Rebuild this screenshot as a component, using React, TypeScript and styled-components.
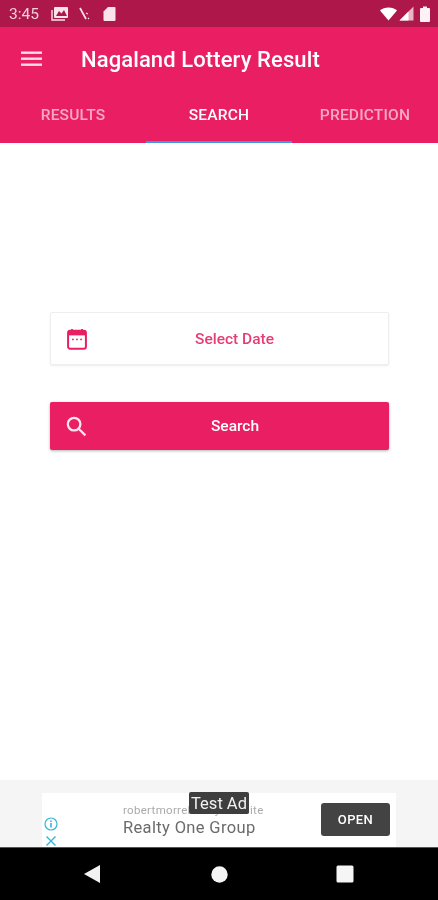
import React from "react";
import styled, { createGlobalStyle } from "styled-components";

const GlobalStyle = createGlobalStyle`
  html, body {
    margin: 0;
    padding: 0;
    background: #fff;
  }
  * {
    box-sizing: border-box;
  }
`;

const Screen = styled.div`
  width: 438px;
  height: 900px;
  display: flex;
  flex-direction: column;
  overflow: hidden;
  font-family: Roboto, "Liberation Sans", sans-serif;
  filter: blur(0.35px);
`;

const StatusBar = styled.div`
  height: 27px;
  flex: none;
  background: #ad1749;
  color: #fbe3ea;
  display: flex;
  align-items: center;
  padding: 0 8px 0 9px;
`;

const Clock = styled.span`
  font-size: 15.5px;
  font-weight: 400;
  width: 42px;
  opacity: 0.9;
`;

const StatusIcons = styled.div<{ $gap: number }>`
  display: flex;
  align-items: center;
  gap: ${(p) => p.$gap}px;
`;

const Spacer = styled.div`
  flex: 1;
`;

const AppBar = styled.header`
  flex: none;
  height: 116px;
  background: #e91e63;
  display: flex;
  flex-direction: column;
`;

const TitleRow = styled.div`
  height: 64px;
  display: flex;
  align-items: center;
  padding: 0 0 0 21px;
`;

const MenuButton = styled.div`
  width: 60px;
  display: flex;
  align-items: center;
`;

const Title = styled.h1`
  margin: 0;
  color: #fff;
  font-size: 22px;
  font-weight: 500;
  letter-spacing: 0.1px;
`;

const Tabs = styled.nav`
  flex: 1;
  display: grid;
  grid-template-columns: 146px 146px 146px;
`;

const Tab = styled.div<{ $active?: boolean }>`
  display: flex;
  align-items: center;
  justify-content: center;
  padding-bottom: 3px;
  font-size: 15.5px;
  font-weight: 500;
  letter-spacing: 0.2px;
  color: ${(p) => (p.$active ? "#fff" : "rgba(255, 255, 255, 0.62)")};
  border-bottom: 2px solid ${(p) => (p.$active ? "#3f97e8" : "transparent")};
`;

const Content = styled.main`
  flex: 1;
  background: #fff;
  padding: 169px 49px 0 50px;
  display: flex;
  flex-direction: column;
  gap: 37px;
`;

const DateCard = styled.div`
  height: 53px;
  background: #fff;
  border: 1px solid #eeeeee;
  border-radius: 2px;
  box-shadow: 0 1px 2px rgba(0, 0, 0, 0.08);
  display: flex;
  align-items: center;
  padding-left: 16px;
  color: #e63d74;
`;

const SearchButton = styled.div`
  height: 48px;
  background: #e91e63;
  border-radius: 2px;
  box-shadow: 0 1px 3px rgba(0, 0, 0, 0.3);
  display: flex;
  align-items: center;
  padding-left: 16px;
  color: #fff;
`;

const FieldLabel = styled.span`
  flex: 1;
  text-align: center;
  font-size: 15.5px;
  font-weight: 500;
  padding-right: 6px;
`;

const AdStrip = styled.div`
  flex: none;
  height: 67px;
  background: #f5f5f5;
  padding: 13px 42px 0 42px;
`;

const AdBanner = styled.div`
  height: 54px;
  background: #fff;
  position: relative;
  display: flex;
  align-items: center;
  padding: 0 6px 2px 81px;
`;

const AdChoices = styled.div`
  position: absolute;
  left: 2px;
  bottom: 1px;
  display: flex;
  flex-direction: column;
  align-items: center;
  gap: 5px;
`;

const AdText = styled.div`
  flex: 1;
  display: flex;
  flex-direction: column;
  gap: 1px;
  padding-top: 1px;
`;

const AdDomain = styled.span`
  font-size: 11.5px;
  color: #aaaaaa;
  letter-spacing: 0.3px;
`;

const AdTitle = styled.span`
  font-size: 16.5px;
  color: #6b6b6b;
  letter-spacing: 0.35px;
`;

const OpenButton = styled.div`
  width: 69px;
  height: 33px;
  background: #434343;
  border-radius: 3px;
  color: #fff;
  font-size: 13px;
  font-weight: 500;
  letter-spacing: 0.4px;
  display: flex;
  align-items: center;
  justify-content: center;
`;

const TestAdBadge = styled.div`
  position: absolute;
  top: -1px;
  left: 147px;
  width: 60px;
  height: 22px;
  background: #3e3e3e;
  border-radius: 2px;
  color: #f2f2f2;
  font-size: 16.5px;
  display: flex;
  align-items: center;
  justify-content: center;
`;

const NavBar = styled.div`
  flex: none;
  height: 53px;
  background: #000;
  border-top: 1px solid #555;
  display: grid;
  grid-template-columns: 128px 125px 1fr;
  align-items: center;
  padding-left: 83px;
`;

const MenuIcon = () => (
  <svg width="22" height="16" viewBox="0 0 22 16" fill="#fbdce7">
    <rect x="0" y="0.5" width="21" height="2.4" />
    <rect x="0" y="6.5" width="21" height="2.4" />
    <rect x="0" y="12.5" width="21" height="2.4" />
  </svg>
);

const CalendarIcon = () => (
  <svg width="20" height="22" viewBox="0 0 22 24" fill="none">
    <path d="M5.5 1v4M16.5 1v4" stroke="#e91e63" strokeWidth="2" />
    <rect x="1.2" y="3" width="19.6" height="19.6" rx="2.2" stroke="#e91e63" strokeWidth="2.2" />
    <rect x="1.2" y="3" width="19.6" height="5" fill="#e91e63" />
    <circle cx="6.5" cy="12.5" r="1" fill="#e91e63" />
    <circle cx="11" cy="12.5" r="1" fill="#e91e63" />
    <circle cx="15.5" cy="12.5" r="1" fill="#e91e63" />
  </svg>
);

const SearchIcon = () => (
  <svg width="21" height="21" viewBox="0 0 22 22" fill="none" stroke="#fde6ee" strokeWidth="2.4">
    <circle cx="8.5" cy="8.5" r="6.6" />
    <path d="M13.3 13.3 20.3 20.3" />
  </svg>
);

const App: React.FC = () => (
  <>
    <GlobalStyle />
    <Screen>
      <StatusBar>
        <Clock>3:45</Clock>
        <StatusIcons $gap={10}>
          <svg width="18" height="16" viewBox="0 0 18 16" fill="none">
            <rect x="3" y="1" width="14" height="11" rx="1" fill="#fbe3ea" />
            <path d="M1 4v10h13" stroke="#fbe3ea" strokeWidth="1.4" />
            <path d="M5 10 8 5l2.5 2.5L13 4l3 6z" fill="#ad1749" />
          </svg>
          <svg width="14" height="16" viewBox="0 0 14 16" fill="none" stroke="#fbe3ea">
            <path d="M1 2 7 13" strokeWidth="1.7" />
            <path d="M7 7l2 1M9 12l1 1" strokeWidth="1.1" />
          </svg>
          <svg width="13" height="16" viewBox="0 0 13 16" fill="#fbe3ea">
            <path d="M5 1h6.5a1 1 0 0 1 1 1v12a1 1 0 0 1-1 1h-10a1 1 0 0 1-1-1V5.5z" />
          </svg>
        </StatusIcons>
        <Spacer />
        <StatusIcons $gap={2}>
          <svg width="17" height="14" viewBox="0 0 17 14" fill="#ffffff">
            <path d="M0 3.6C2.2 1.5 5.2 0.4 8.5 0.4S14.8 1.5 17 3.6L8.5 13.6z" />
          </svg>
          <svg width="15" height="15" viewBox="0 0 15 15">
            <path d="M14.5 0.5V14.5H0.5z" fill="#e9b4c6" />
            <path d="M9.5 5.5V14.5H0.5z" fill="#ffffff" />
          </svg>
          <svg width="10" height="16" viewBox="0 0 10 16" fill="#fdf2f5" style={{ marginLeft: 4 }}>
            <path d="M3 0.5h4v1.5h2a1 1 0 0 1 1 1v12a1 1 0 0 1-1 1H1a1 1 0 0 1-1-1V3a1 1 0 0 1 1-1h2z" />
          </svg>
        </StatusIcons>
      </StatusBar>

      <AppBar>
        <TitleRow>
          <MenuButton>
            <MenuIcon />
          </MenuButton>
          <Title>Nagaland Lottery Result</Title>
        </TitleRow>
        <Tabs>
          <Tab>RESULTS</Tab>
          <Tab $active>SEARCH</Tab>
          <Tab>PREDICTION</Tab>
        </Tabs>
      </AppBar>

      <Content>
        <DateCard>
          <CalendarIcon />
          <FieldLabel>Select Date</FieldLabel>
        </DateCard>
        <SearchButton>
          <SearchIcon />
          <FieldLabel>Search</FieldLabel>
        </SearchButton>
      </Content>

      <AdStrip>
        <AdBanner>
          <AdChoices>
            <svg width="14" height="14" viewBox="0 0 14 14" fill="none" stroke="#35b5d6" strokeWidth="1.2">
              <circle cx="7" cy="7" r="6" />
              <path d="M7 3.5v1.4M7 6v4.5" strokeWidth="1.6" />
            </svg>
            <svg width="10" height="10" viewBox="0 0 10 10" fill="none" stroke="#35b5d6" strokeWidth="1.4">
              <path d="M0.5 0.5 9.5 9.5M9.5 0.5 0.5 9.5" />
            </svg>
          </AdChoices>
          <AdText>
            <AdDomain>robertmorrelrealtyone.site</AdDomain>
            <AdTitle>Realty One Group</AdTitle>
          </AdText>
          <OpenButton>OPEN</OpenButton>
          <TestAdBadge>Test Ad</TestAdBadge>
        </AdBanner>
      </AdStrip>

      <NavBar>
        <svg width="18" height="20" viewBox="0 0 18 20" fill="#f2f2f2">
          <path d="M17 1V19L1 10z" />
        </svg>
        <svg width="17" height="17" viewBox="0 0 17 17" fill="#f5f5f5">
          <circle cx="8.5" cy="8.5" r="8.2" />
        </svg>
        <svg width="18" height="18" viewBox="0 0 18 18" fill="#f5f5f5">
          <rect x="0.5" y="0.5" width="17" height="17" rx="1.5" />
        </svg>
      </NavBar>
    </Screen>
  </>
);

export default App;
